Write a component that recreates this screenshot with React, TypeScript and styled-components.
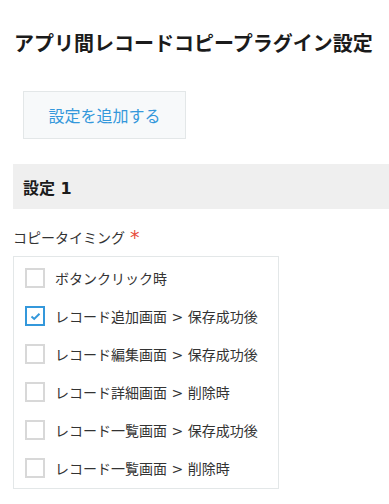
import React, { useState } from 'react';
import styled, { createGlobalStyle } from 'styled-components';

const GlobalStyle = createGlobalStyle`
  body {
    margin: 0;
    background: #fff;
    font-family: "DejaVu Sans", "Noto Sans CJK JP", sans-serif;
    color: #333;
  }
`;

const Page = styled.div`
  padding: 30px 0 0 13px;
`;

const Title = styled.h1`
  margin: 0 0 0 1px;
  font-size: 20px;
  line-height: 28px;
  font-weight: 700;
  color: #1b1b1b;
`;

const AddButton = styled.button`
  margin: 33px 0 0 10px;
  width: 163px;
  height: 48px;
  background: #f7f9fa;
  border: 1px solid #e3e7e8;
  color: #3498db;
  font-family: inherit;
  font-size: 16px;
  cursor: pointer;
`;

const SectionHead = styled.div`
  margin-top: 25px;
  height: 45px;
  background: #efefef;
  display: flex;
  align-items: center;
  padding-left: 10px;
  font-size: 16px;
  font-weight: 700;
  color: #1b1b1b;
`;

const FieldLabel = styled.div`
  margin-top: 18px;
  height: 20px;
  display: flex;
  align-items: center;
  font-size: 14px;
  color: #333;
`;

const Required = styled.span`
  color: #e74c3c;
  margin-left: 5px;
  font-size: 19px;
  line-height: 20px;
`;

const OptionBox = styled.div`
  margin-top: 9px;
  width: 266px;
  box-sizing: border-box;
  border: 1px solid #e3e7e8;
  padding: 11px 0 10px 11px;
  display: flex;
  flex-direction: column;
  gap: 18px;
`;

const Option = styled.label`
  display: flex;
  align-items: center;
  gap: 10px;
  height: 20px;
  font-size: 14px;
  color: #333;
  cursor: pointer;
`;

const Box = styled.span<{ $checked: boolean }>`
  width: 20px;
  height: 20px;
  box-sizing: border-box;
  border: 2px solid ${(p) => (p.$checked ? '#3498db' : '#d8d8d8')};
  display: flex;
  align-items: center;
  justify-content: center;
  background: #fff;
`;

const options = [
  'ボタンクリック時',
  'レコード追加画面 > 保存成功後',
  'レコード編集画面 > 保存成功後',
  'レコード詳細画面 > 削除時',
  'レコード一覧画面 > 保存成功後',
  'レコード一覧画面 > 削除時',
];

export default function App() {
  const [checked, setChecked] = useState<boolean[]>([false, true, false, false, false, false]);

  const toggle = (i: number) =>
    setChecked((prev) => prev.map((v, j) => (j === i ? !v : v)));

  return (
    <Page>
      <GlobalStyle />
      <Title>アプリ間レコードコピープラグイン設定</Title>
      <AddButton>設定を追加する</AddButton>
      <SectionHead>設定 1</SectionHead>
      <FieldLabel>
        コピータイミング<Required>*</Required>
      </FieldLabel>
      <OptionBox>
        {options.map((text, i) => (
          <Option key={text} onClick={() => toggle(i)}>
            <Box $checked={checked[i]}>
              {checked[i] && (
                <svg width="11" height="9" viewBox="0 0 11 9">
                  <path d="M1.5 4.6 L4.2 7 L9.5 1.8" fill="none" stroke="#3498db" strokeWidth="2" />
                </svg>
              )}
            </Box>
            {text}
          </Option>
        ))}
      </OptionBox>
    </Page>
  );
}
